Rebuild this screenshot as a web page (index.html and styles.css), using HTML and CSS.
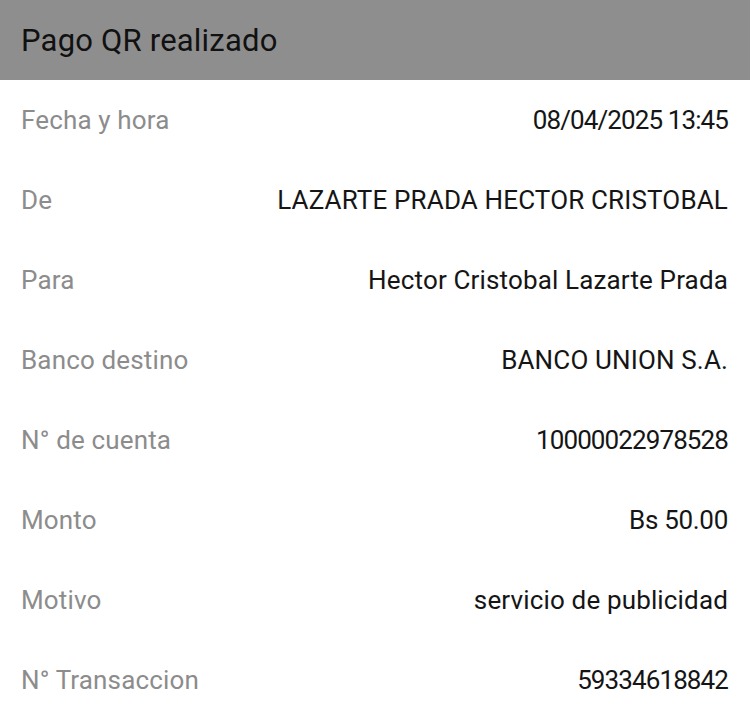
FILE: index.html
```html
<!DOCTYPE html>
<html lang="es">
<head>
<meta charset="utf-8">
<title>Pago QR realizado</title>
<link rel="stylesheet" href="styles.css">
</head>
<body>
<header class="header"><h1 class="title">Pago QR realizado</h1></header>
<main class="details">
  <div class="row"><span class="label">Fecha y hora</span><span class="value num">08/04/2025 13:45</span></div>
  <div class="row"><span class="label">De</span><span class="value">LAZARTE PRADA HECTOR CRISTOBAL</span></div>
  <div class="row"><span class="label">Para</span><span class="value">Hector Cristobal Lazarte Prada</span></div>
  <div class="row"><span class="label">Banco destino</span><span class="value">BANCO UNION S.A.</span></div>
  <div class="row"><span class="label">N° de cuenta</span><span class="value num">10000022978528</span></div>
  <div class="row"><span class="label">Monto</span><span class="value num-soft">Bs 50.00</span></div>
  <div class="row"><span class="label">Motivo</span><span class="value">servicio de publicidad</span></div>
  <div class="row"><span class="label">N° Transaccion</span><span class="value num">59334618842</span></div>
</main>
</body>
</html>
```
FILE: styles.css
```css
html, body {
  margin: 0;
  padding: 0;
  background: #ffffff;
}
body {
  font-family: Roboto, "Liberation Sans", sans-serif;
  width: 750px;
  height: 720px;
  overflow: hidden;
}
.header {
  height: 80px;
  background: #8e8e8e;
  display: flex;
  align-items: center;
  padding: 0 21px;
}
.title {
  margin: 0;
  font-size: 31px;
  font-weight: 400;
  letter-spacing: 0.2px;
  color: #111111;
}
.details {
  display: flex;
  flex-direction: column;
}
.row {
  height: 80px;
  display: flex;
  align-items: center;
  justify-content: space-between;
  padding: 0 22px 0 21px;
  font-size: 26px;
  letter-spacing: 0.15px;
}
.label {
  color: #8c8c8c;
}
.value {
  color: #151515;
}
.num {
  letter-spacing: -0.9px;
}
.num-soft {
  letter-spacing: -0.3px;
}
```
